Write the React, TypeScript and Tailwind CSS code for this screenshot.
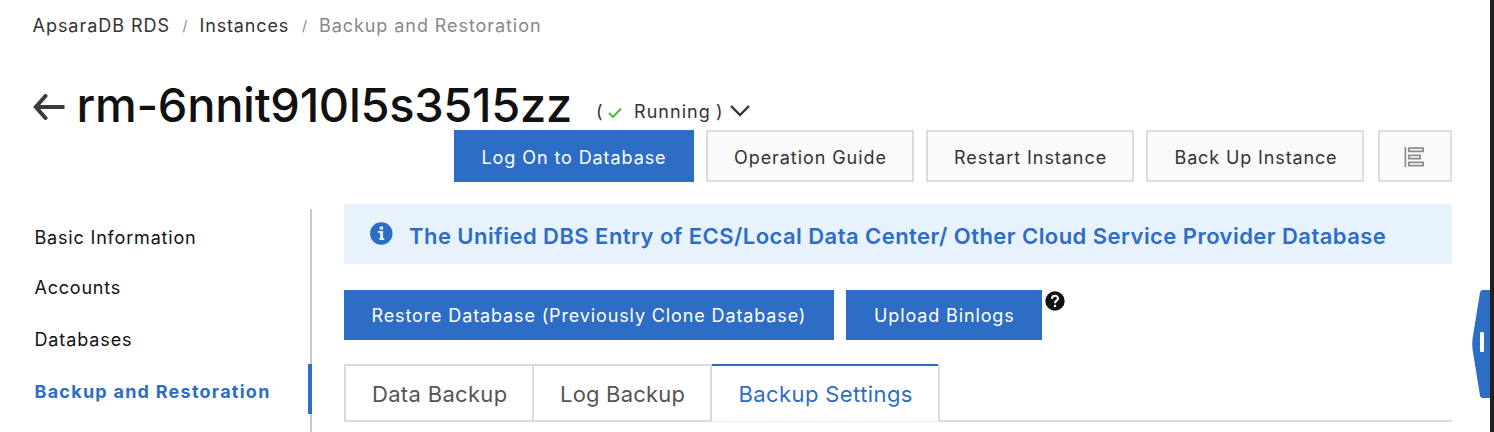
import type { ReactNode } from "react";

const sideItems = [
  { label: "Basic Information", cls: "h-[50px] tracking-[0.82px]" },
  { label: "Accounts", cls: "h-[51px] tracking-[0.78px]" },
  { label: "Databases", cls: "h-[52px] tracking-[0.88px]" },
];

function OutlineButton({ children, className }: { children: ReactNode; className: string }) {
  return (
    <button className={`flex h-[52px] items-center border-2 border-[#dcdcdc] bg-[#fafafa] pt-0.5 text-[#333] ${className}`}>
      {children}
    </button>
  );
}

function Breadcrumb() {
  return (
    <nav className="flex h-[51px] items-center pl-[32.5px] text-[#333]">
      <span className="w-[150px] tracking-[0.97px]">ApsaraDB RDS</span>
      <span className="w-[17px] text-[14px] text-[#888]">/</span>
      <span className="w-[102.5px] tracking-[0.85px]">Instances</span>
      <span className="w-[17px] text-[14px] text-[#888]">/</span>
      <span className="tracking-[0.93px] text-[#888]">Backup and Restoration</span>
    </nav>
  );
}

function TitleRow() {
  return (
    <header className="flex h-[79px] items-start pl-[33px] pt-[25px]">
      <svg className="mt-[18px] shrink-0" width="32" height="26" viewBox="0 0 32 26" fill="none" stroke="#373d41" strokeWidth="4">
        <path d="M31.5 13H3" />
        <path d="M12.5 2L2.8 13L12.5 24" strokeLinecap="round" strokeLinejoin="miter" />
      </svg>
      <h1 className="ml-[11.5px] mt-[-1px] w-[519.5px] text-[47px] font-medium leading-[60px] tracking-[-0.3px] text-[#111]">rm-6nnit910l5s3515zz</h1>
      <div className="mt-[20px] flex h-[30px] items-center text-[#333]">
        <span className="w-[12px]">(</span>
        <svg className="mt-[3px]" width="14" height="12" viewBox="0 0 14 12" fill="none" stroke="#4fb233" strokeWidth="1.9">
          <path d="M1 6L5 10L13 1.5" />
        </svg>
        <span className="ml-[12px] w-[82px] tracking-[1.05px]">Running</span>
        <span className="w-[13.5px]">)</span>
        <svg width="20" height="12" viewBox="0 0 20 12" fill="none" stroke="#333" strokeWidth="2.4">
          <path d="M1 1L10 10L19 1" />
        </svg>
      </div>
    </header>
  );
}

function Actions() {
  return (
    <div className="flex h-[52px] pl-[454px]">
      <button className="mr-3 flex w-[240px] items-center bg-[#2d6dc5] pl-[27.5px] pt-0.5 tracking-[0.91px] text-white">Log On to Database</button>
      <OutlineButton className="mr-3 w-[208px] pl-[26px] tracking-[0.93px]">Operation Guide</OutlineButton>
      <OutlineButton className="mr-3 w-[208px] pl-[26px] tracking-[0.95px]">Restart Instance</OutlineButton>
      <OutlineButton className="mr-[14px] w-[218px] pl-[26.5px] tracking-[0.87px]">Back Up Instance</OutlineButton>
      <OutlineButton className="w-[74px] pl-[24px]">
        <svg width="20" height="20" viewBox="0 0 20 20" fill="none" stroke="#8c8c8c" strokeWidth="1.7">
          <path d="M1.4 0V20" />
          <path d="M4.8 1.2H19.2V4.4H4.8ZM4.8 8.4H16.2V11.6H4.8ZM4.8 15.4H19.2V18.6H4.8Z" />
        </svg>
      </OutlineButton>
    </div>
  );
}

function Sidebar() {
  return (
    <aside className="mt-[27px] flex w-[312px] shrink-0 flex-col">
      <ul className="flex flex-1 flex-col border-r-2 border-[#c8c8c8] pt-[3px] text-[#111]">
        {sideItems.map((item) => (
          <li key={item.label} className={`flex items-center pl-[34.5px] ${item.cls}`}>{item.label}</li>
        ))}
        <li className="-mr-0.5 mt-[-1px] flex h-[50px] items-center border-r-4 border-[#2d6dc5] pl-[34.5px] pt-[4px] font-bold tracking-[1.25px] text-[#2d6dc5]">
          Backup and Restoration
        </li>
      </ul>
    </aside>
  );
}

function Tabs() {
  return (
    <div className="mt-6 flex h-[58px] text-[22px] text-[#555]">
      <div className="flex w-[188px] items-center border-2 border-r-0 border-[#dcdcdc] pl-[26px] pt-[3px] tracking-[0.32px]">Data Backup</div>
      <div className="flex w-[178px] items-center border-2 border-r-0 border-[#dcdcdc] pl-[26px] pt-[3px] tracking-[0.2px]">Log Backup</div>
      <div className="flex w-[230px] flex-col border-x-2 border-[#dcdcdc]">
        <div className="h-0.5 bg-[#2d6dc5]" />
        <div className="flex flex-1 items-center border-b border-[#f0f0f0] pl-[26.5px] pt-[2px] tracking-[0.4px] text-[#2d6dc5]">Backup Settings</div>
      </div>
      <div className="flex-1 border-b-2 border-[#dcdcdc]" />
    </div>
  );
}

export default function App() {
  return (
    <div className="flex h-[432px] w-[1494px] overflow-hidden bg-white font-[Inter,sans-serif] text-[18px]">
      <div className="relative flex w-[1490px] flex-col">
        <Breadcrumb />
        <TitleRow />
        <Actions />
        <div className="flex min-h-0 flex-1">
          <Sidebar />
          <main className="ml-8 mt-[22px] w-[1108px]">
            <div className="flex h-[60px] items-center bg-[#e7f2fd] pl-[26px] text-[#2d6dc5]">
              <svg className="mt-[-1px]" width="23" height="23" viewBox="0 0 23 23">
                <circle cx="11.3" cy="11.5" r="11.2" fill="#2d6dc5" />
                <path d="M9.7 4.5H13.1V7.4H9.7ZM8 9H13.1V16.2H14.3V18H9.4V16.2H10.1V10.8H8Z" fill="#e7f2fd" />
              </svg>
              <span className="ml-4 mt-[4px] whitespace-nowrap text-[22px] font-semibold tracking-[0.45px]">
                The Unified DBS Entry of ECS/Local Data Center/ Other Cloud Service Provider Database
              </span>
            </div>
            <div className="mt-[26px] flex h-[50px]">
              <button className="mr-3 flex w-[490px] items-center bg-[#2d6dc5] pl-[27.5px] pt-[1px] tracking-[0.87px] text-white">
                Restore Database (Previously Clone Database)
              </button>
              <button className="flex w-[196px] items-center bg-[#2d6dc5] pl-[28px] pt-[1px] tracking-[0.87px] text-white">Upload Binlogs</button>
              <svg className="ml-[3px] mt-[1px]" width="20" height="20" viewBox="0 0 20 20" fill="none">
                <circle cx="10" cy="10" r="9.7" fill="#111" />
                <path d="M7 7.7C7 3.9 13 3.9 13 7.5C13 9.8 10 9.5 10 12.2" stroke="#fff" strokeWidth="2.1" />
                <path d="M8.9 13.8H11.1V16H8.9Z" fill="#fff" />
              </svg>
            </div>
            <Tabs />
          </main>
        </div>
        <svg className="absolute right-0 top-[290px]" width="18" height="108" viewBox="0 0 18 108">
          <path d="M18 0H10.5Q8.5 0 8 2.5L.5 49Q0 54 .5 59L8 105.5Q8.5 108 10.5 108H18Z" fill="#2d6dc5" />
          <rect x="8" y="42" width="4" height="20" rx="1" fill="#fff" />
        </svg>
      </div>
      <div className="w-1 bg-[#20201e]" />
    </div>
  );
}
